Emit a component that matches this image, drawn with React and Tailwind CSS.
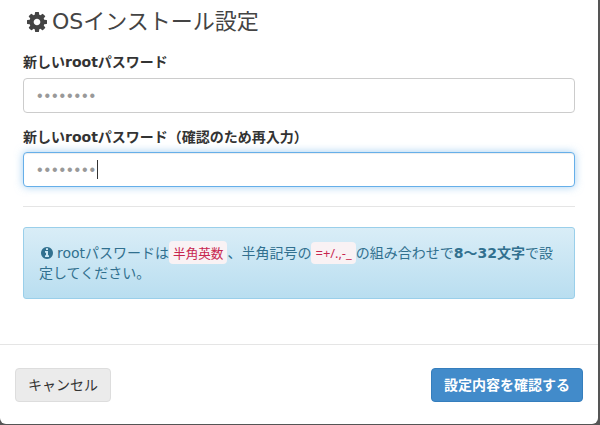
import React from "react";

const cjk = "font-['DejaVu_Sans','Noto_Sans_CJK_JP',sans-serif]";

function Gear() {
  return (
    <svg width="20" height="20" viewBox="0 0 1536 1536" className="shrink-0" fill="#444">
      <path d="M1024 768q0-106-75-181t-181-75-181 75-75 181 75 181 181 75 181-75 75-181zm512-109v222q0 12-8 23t-20 13l-185 28q-19 54-39 91 35 50 107 138 10 12 10 25t-9 23q-27 37-99 108t-94 71q-12 0-26-9l-138-108q-44 23-91 38-16 136-29 186-7 28-36 28h-222q-14 0-24.500-8.500t-11.500-21.500l-28-184q-49-16-90-37l-141 107q-10 9-25 9-14 0-25-11-126-114-165-168-7-10-7-23 0-12 8-23 15-21 51-66.500t54-70.500q-27-50-41-99l-183-27q-13-2-21-12.500t-8-23.500v-222q0-12 8-23t19-13l186-28q14-46 39-92-40-57-107-138-10-12-10-24 0-10 9-23 26-36 98.500-107.500t94.500-71.500q13 0 26 10l138 107q44-23 91-38 16-136 29-186 7-28 36-28h222q14 0 24.500 8.500t11.500 21.500l28 184q49 16 90 37l142-107q9-9 24-9 13 0 25 10 129 119 165 170 7 8 7 22 0 12-8 23-15 21-51 66.500t-54 70.500q26 50 41 98l183 28q13 2 21 12.500t8 23.500z" />
    </svg>
  );
}

function Info() {
  return (
    <svg width="12" height="12" viewBox="0 0 1536 1536" className="inline-block shrink-0 align-[-1px]" fill="#31708f">
      <path d="M1024 1248v-160q0-14-9-23t-23-9h-96v-512q0-14-9-23t-23-9h-320q-14 0-23 9t-9 23v160q0 14 9 23t23 9h96v320h-96q-14 0-23 9t-9 23v160q0 14 9 23t23 9h448q14 0 23-9t9-23zm-128-896v-160q0-14-9-23t-23-9h-192q-14 0-23 9t-9 23v160q0 14 9 23t23 9h192q14 0 23-9t9-23zm640 416q0 209-103 385.500t-279.500 279.500-385.500 103-385.500-103-279.500-279.500-103-385.500 103-385.500 279.500-279.500 385.500-103 385.500 103 279.500 279.500 103 385.500z" />
    </svg>
  );
}

export default function App() {
  return (
    <div className={`h-[425px] w-[600px] overflow-hidden bg-[#555] ${cjk}`}>
      <div className="flex h-[424px] w-[598px] flex-col rounded-b-[6px] bg-white text-[14px] leading-[20px] text-[#333]">
        <div className="flex h-[44px] items-center gap-[5px] pl-[27px]">
          <Gear />
          <h1 className="text-[22px] font-normal leading-[22px] text-[#444]">OSインストール設定</h1>
        </div>
        <div className="flex flex-1 flex-col px-[23px] pt-[8px]">
          <label className="mb-[6px] block h-[20px] text-[14px] font-bold leading-[20px] text-[#333]">新しいrootパスワード</label>
          <input
            readOnly
            placeholder="••••••••"
            className="h-[35px] w-[552px] rounded-[4px] border border-[#ccc] bg-white pl-[13px] pr-[12px] font-['Liberation_Sans',sans-serif] text-[16px] tracking-[1.900px] outline-none placeholder:text-[#999]"
          />
          <label className="mb-[5px] mt-[14px] block h-[20px] text-[14px] font-bold leading-[20px] text-[#333]">新しいrootパスワード（確認のため再入力）</label>
          <div className="relative h-[35px] w-[552px]">
            <input
              readOnly
              placeholder="••••••••"
              className="h-[35px] w-full rounded-[4px] border border-[#66afe9] bg-white pl-[13px] pr-[12px] font-['Liberation_Sans',sans-serif] text-[16px] tracking-[1.900px] shadow-[inset_0_1px_1px_rgba(0,0,0,0.075),0_0_8px_rgba(102,175,233,0.6)] outline-none placeholder:text-[#999]"
            />
            <span className="absolute left-[74px] top-[8px] h-[19px] w-px bg-[#333]" />
          </div>
          <hr className="mb-[20px] mt-[19px] border-t border-[#e5e5e5]" />
          <div className="h-[72px] w-[552px] rounded-[3px] border border-[#9acfea] bg-gradient-to-b from-[#d9edf7] to-[#b9def0] px-[15px] py-[15px] text-[#31708f]">
            <p className="[word-break:break-all]">
              <span className="ml-[2px] mr-[4px]"><Info /></span>rootパスワードは<code className="rounded-[4px] bg-[#f9f2f4] px-[4px] py-[2px] font-['Noto_Sans_CJK_JP',sans-serif] text-[12.600px] text-[#c7254e]">半角英数</code>、半角記号の<code className="rounded-[4px] bg-[#f9f2f4] px-[4px] py-[2px] font-['Open_Sans',sans-serif] text-[13px] text-[#c7254e]">=+/.,-_</code>の組み合わせで<b>8〜32文字</b>で設定してください。
            </p>
          </div>
        </div>
        <div className="flex h-[80px] items-center justify-between border-t border-[#e5e5e5] pl-[15px] pr-[15px]">
          <button className="h-[34px] w-[96px] rounded-[4px] border border-[#ddd] bg-[#ebebeb] text-[14px] text-[#333]">キャンセル</button>
          <button className="h-[34px] w-[152px] rounded-[4px] border border-[#357ebd] bg-[#428bca] text-[14px] font-bold text-white">設定内容を確認する</button>
        </div>
      </div>
    </div>
  );
}
